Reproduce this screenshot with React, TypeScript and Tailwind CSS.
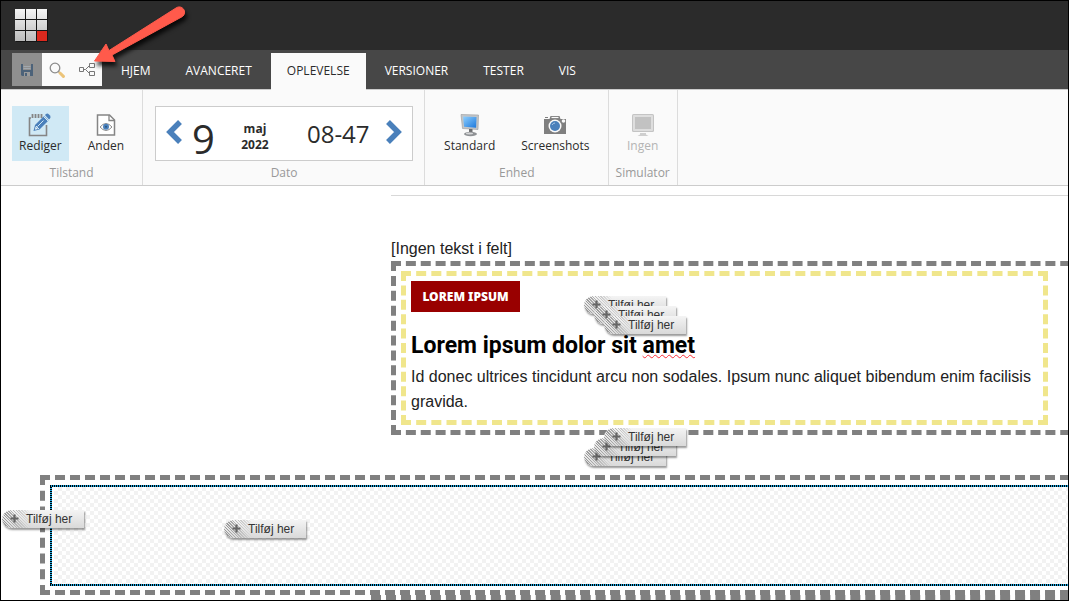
import { ReactNode } from "react";
import clsx from "clsx";

const tabs = ["HJEM", "AVANCERET", "OPLEVELSE", "VERSIONER", "TESTER", "VIS"];

function Logo() {
  const cells = [0, 1, 2];

  return (
    <svg width="34" height="34" viewBox="0 0 34 34" aria-label="Sitecore">
      <defs>
        <linearGradient id="logo" x1="0" y1="0" x2="0" y2="33" gradientUnits="userSpaceOnUse">
          <stop offset="0" stopColor="#f5f5f5" />
          <stop offset="1" stopColor="#b9b9b9" />
        </linearGradient>
      </defs>
      <rect x="1" y="1" width="32" height="32" fill="#151515" />
      {cells.map((row) =>
        cells.map((col) => (
          <rect
            key={`${row}-${col}`}
            x={col * 11}
            y={row * 11}
            width="10"
            height="10"
            fill={row === 2 && col === 2 ? "#dc291e" : "url(#logo)"}
          />
        ))
      )}
    </svg>
  );
}

function SaveIcon() {
  return (
    <svg width="14" height="14" viewBox="0 0 14 14">
      <path d="M1 1h12v12H2l-1-1z" fill="#4c6279" />
      <path d="M3 1h8v6H3z" fill="#8f8f8f" />
      <path d="M3.5 3.5h7M3.5 5.5h7" stroke="#a2a8ae" />
      <path d="M4 9h6v4H4z" fill="#9b9b9b" />
      <path d="M5 10h2v3H5z" fill="#4c6279" />
    </svg>
  );
}

function SearchIcon() {
  return (
    <svg width="16" height="16" viewBox="0 0 16 16" fill="none">
      <circle cx="6" cy="6" r="4.8" stroke="#8c8c8c" strokeWidth="1.3" />
      <path d="M9.5 9.5l1.5 1.5" stroke="#8c8c8c" strokeWidth="1.5" />
      <path d="M11 11l3.4 3.4" stroke="#ecc479" strokeWidth="3" strokeLinecap="round" />
    </svg>
  );
}

function TreeIcon() {
  return (
    <svg width="18" height="16" viewBox="0 0 18 16" fill="none" stroke="#777">
      <path d="M1.500 5.500h4v4h-4zM11.500 1.500h5v4h-5zM11.500 9.500h5v4h-5z" />
      <path d="M6 7.500h1.500l4-4M7.500 7.500l4 4" />
    </svg>
  );
}

function EditIcon() {
  return (
    <svg width="24" height="24" viewBox="0 0 24 24" fill="none">
      <path d="M3 5H1.500v17.500h17V12" stroke="#858585" strokeWidth="1.600" />
      <path d="M4.500 1v4M7.500 1v4M10.500 1v4M13.500 1v4" stroke="#858585" strokeWidth="1.800" />
      <path d="M5.500 18l1.500-6L16 3l4.500 4.500-9 9z" fill="#4a80bb" />
      <path d="M17 2l1-1q1.500-1 3 .5l1 1q1.200 1.500 0 3l-1 1z" fill="#4a80bb" />
      <path d="M15.500 3.500L20 8M8 13l3 3M9.500 13.500l6-6" stroke="#d0e8f5" strokeWidth="1" />
      <path d="M7.500 13.500l2.500 2.500-3 .8z" fill="#e4f1f8" />
    </svg>
  );
}

function PageIcon() {
  return (
    <svg width="24" height="24" viewBox="0 0 24 24" fill="none">
      <path d="M3.500 2h12l5 5v15h-17z" fill="#fff" stroke="#858585" strokeWidth="1.500" />
      <path d="M15 2v5.500h5.500" stroke="#858585" strokeWidth="1.300" />
      <path d="M6 14q6-7 12 0q-6 7-12 0z" stroke="#8c8c8c" />
      <circle cx="12" cy="13.800" r="3" fill="#4a80bb" />
      <circle cx="12" cy="13.800" r="1" fill="#2c567f" />
    </svg>
  );
}

function ScreenIcon() {
  return (
    <svg width="24" height="24" viewBox="0 0 24 24">
      <defs>
        <linearGradient id="screen" x1="0" y1="0" x2="1" y2="1">
          <stop offset="0" stopColor="#8fd0ff" />
          <stop offset="1" stopColor="#1c78dc" />
        </linearGradient>
      </defs>
      <path d="M3 1.500l17.500.5-.5 14.500-15.500-1z" fill="#c3c5c7" stroke="#96999c" strokeWidth=".6" />
      <path d="M5 3.500l13.500.4-.4 10.800-12-.9z" fill="url(#screen)" />
      <path d="M11 16h3.500v4H11z" fill="#6d6f71" />
      <ellipse cx="12.500" cy="21" rx="6.500" ry="2.200" fill="#8e9194" />
      <ellipse cx="11.500" cy="20.500" rx="3.500" ry=".9" fill="#d5d6d7" />
    </svg>
  );
}

function CameraIcon() {
  return (
    <svg width="24" height="24" viewBox="0 0 24 24">
      <path d="M1 6h5.500l1-3h9l1 3H23v15H1z" fill="#7f7f7f" />
      <path d="M8.500 4.500h7" stroke="#fafafa" strokeWidth="1.200" />
      <path d="M2 4.500h3" stroke="#7f7f7f" />
      <circle cx="12" cy="13" r="6.500" fill="#fafafa" />
      <circle cx="12" cy="13" r="5" fill="#4a80bb" />
      <path d="M9 12q1-2 3-2" stroke="#a9c6e2" fill="none" />
      <circle cx="20.500" cy="8" r="1.800" fill="#fafafa" />
    </svg>
  );
}

function MonitorIcon() {
  return (
    <svg width="24" height="24" viewBox="0 0 24 24">
      <rect x="1" y="1" width="22" height="18" rx="1.500" fill="#c4c4c4" />
      <rect x="2" y="2" width="20" height="16" rx="1" fill="#dedede" />
      <path d="M4 4h16v12H4z" fill="#c2c2c2" />
      <path d="M9 20h6v1.500l2.500 1.500h-11L9 21.500z" fill="#cfcfcf" />
    </svg>
  );
}

function Chevron({ d }: { d: string }) {
  return (
    <svg width="18" height="26" viewBox="0 0 18 26" fill="none">
      <path d={d} stroke="#4a80bb" strokeWidth="5.500" />
    </svg>
  );
}

function Pointer() {
  return (
    <svg
      className="pointer-events-none absolute left-[88px] top-0 drop-shadow-[2px_4px_2px_rgba(0,0,0,0.8)]"
      width="108"
      height="72"
      viewBox="0 0 108 72"
    >
      <path
        d="M5.500 60L17 43L20 49.500L87 7A5.200 5.200 0 0 1 93.500 15.500L23 54L26 60.500Z"
        fill="#ff5a4b"
        stroke="#ff5a4b"
        strokeLinejoin="round"
      />
    </svg>
  );
}

// black and blue selection edge of the empty placeholder
function Marquee() {
  return (
    <svg className="block h-0.5 w-full bg-[#1ba5e0]">
      <line x2="100%" y1="1" y2="1" stroke="#000" strokeWidth="2" strokeDasharray="1 1" shapeRendering="crispEdges" />
    </svg>
  );
}

interface ToolButtonProps {
  icon: ReactNode;
  label: string;
  active?: boolean;
  disabled?: boolean;
}

function ToolButton({ icon, label, active, disabled }: ToolButtonProps) {
  return (
    <button
      type="button"
      disabled={disabled}
      className={clsx(
        "flex h-[55px] flex-col items-center px-[7px] pt-[7px]",
        active && "bg-[#d0e9f5]",
        disabled ? "text-[#b4b4b4]" : "text-[#2b2b2b]"
      )}
    >
      {icon}
      <span className="mt-px leading-4">{label}</span>
    </button>
  );
}

interface ToolGroupProps {
  label: string;
  className: string;
  children: ReactNode;
}

function ToolGroup({ label, className, children }: ToolGroupProps) {
  return (
    <div className={clsx("flex flex-col items-center border-r border-[#dcdcdc] pt-4", className)}>
      <div className="flex gap-3">{children}</div>
      <span className="mt-1 leading-4 text-[#999]">{label}</span>
    </div>
  );
}

function AddHere({ className }: { className: string }) {
  return (
    <button
      type="button"
      className={clsx(
        "absolute flex h-[18px] w-[82px] items-center rounded-l-full bg-linear-to-b from-[#f4f4f4] to-[#d9d9d9] pl-6 text-xs text-[#333] shadow-[1px_2px_2px_rgba(0,0,0,0.4)]",
        className
      )}
    >
      <span className="absolute inset-y-0 left-0 w-8 rounded-l-full bg-[repeating-linear-gradient(45deg,#999_0_1px,transparent_1px_2px)] mask-r-from-10% mask-r-to-90%" />
      <svg className="absolute left-2 top-1" width="9" height="9" viewBox="0 0 9 9">
        <path d="M4.500 .5v8M.5 4.500h8" stroke="#666" strokeWidth="2.200" />
      </svg>
      Tilføj her
    </button>
  );
}

export default function App() {
  return (
    <div className="relative overflow-hidden border border-black bg-white font-['Open_Sans',sans-serif] text-xs">
      <header className="flex h-[49px] bg-[#2b2b2b] pl-[14px] pt-2">
        <Logo />
      </header>

      <nav className="flex h-10 border-b border-[#ccc] bg-[#474747] pl-[11px] pt-[3px]">
        <div className="flex h-[33px]">
          <button type="button" aria-label="Gem" className="flex w-[30px] items-center justify-center bg-[#8f8f8f]">
            <SaveIcon />
          </button>
          <button type="button" aria-label="Søg" className="flex w-[30px] items-center justify-center bg-[#fafafa]">
            <SearchIcon />
          </button>
          <button type="button" aria-label="Struktur" className="flex w-[30px] items-center justify-center bg-[#fafafa]">
            <TreeIcon />
          </button>
        </div>
        <div className="ml-[3px] flex gap-[3px]">
          {tabs.map((tab) => (
            <a
              key={tab}
              href="#"
              className={clsx(
                "h-[37px] px-4 pt-[10px] leading-4",
                tab === "OPLEVELSE" ? "bg-[#fafafa] text-[#2b2b2b]" : "text-white"
              )}
            >
              {tab}
            </a>
          ))}
        </div>
      </nav>

      <section className="flex h-24 border-b border-[#ccc] bg-[#fafafa]">
        <ToolGroup label="Tilstand" className="px-[11px]">
          <ToolButton icon={<EditIcon />} label="Rediger" active />
          <ToolButton icon={<PageIcon />} label="Anden" />
        </ToolGroup>

        <ToolGroup label="Dato" className="pl-3 pr-[11px]">
          <div className="flex h-[55px] w-[258px] items-center border border-[#ccc] bg-white px-[9px] text-[#2b2b2b]">
            <button type="button" aria-label="Forrige" className="pb-1">
              <Chevron d="M15 3L5 13l10 10" />
            </button>
            <span className="ml-[9px] pt-2.5 text-[40px] leading-10">9</span>
            <span className="ml-5 w-10 pt-1.5 text-center font-bold leading-4">
              maj
              <br />
              2022
            </span>
            <span className="ml-8 flex-1 text-2xl">08-47</span>
            <button type="button" aria-label="Næste" className="pb-1">
              <Chevron d="M3 3l10 10L3 23" />
            </button>
          </div>
        </ToolGroup>

        <ToolGroup label="Enhed" className="pl-3 pr-[11px]">
          <ToolButton icon={<ScreenIcon />} label="Standard" />
          <ToolButton icon={<CameraIcon />} label="Screenshots" />
        </ToolGroup>

        <ToolGroup label="Simulator" className="px-[7px]">
          <ToolButton icon={<MonitorIcon />} label="Ingen" disabled />
        </ToolGroup>
      </section>

      <main className="relative font-['Liberation_Sans',Arial,sans-serif] text-base leading-[25px] text-[#222]">
        <div className="pl-[390px] pt-[9px]">
          <hr className="mb-10 border-[#d8d8d8]" />
          <p>[Ingen tekst i felt]</p>
          <div className="-mr-8 border-[5px] border-r-0 border-dashed border-[gray] p-[5px] pr-[52px]">
            <div className="border-[5px] border-dashed border-[#f0e68c] p-[5px] pb-1.5">
              <span className="flex h-[31px] w-[109px] items-center justify-center bg-[#900] font-['Noto_Sans',sans-serif] text-xs font-black text-white">
                LOREM IPSUM
              </span>
              <h2 className="mt-[18px] h-[34px] font-['Roboto',sans-serif] text-[23px] font-bold leading-8 text-black">
                Lorem ipsum dolor sit{" "}
                <span className="underline decoration-red-500 decoration-wavy decoration-1">amet</span>
              </h2>
              <p>
                Id donec ultrices tincidunt arcu non sodales. Ipsum nunc aliquet bibendum enim facilisis gravida.
              </p>
            </div>
          </div>
        </div>

        <div className="-mr-8 ml-[39px] mt-10 border-[5px] border-r-0 border-dashed border-[gray] pb-1 pl-[5px] pt-[5px]">
          <Marquee />
          <div className="flex h-[97px]">
            <div className="w-0.5 bg-[linear-gradient(#000_50%,#1ba5e0_0)] bg-size-[2px_2px]" />
            <div className="ml-0.5 flex-1 bg-[conic-gradient(#f2f2f2_25%,#fff_0_50%,#f2f2f2_0_75%,#fff_0)] bg-size-[8px_8px]" />
          </div>
          <Marquee />
        </div>
        <div className="-mr-8 ml-[370px] border-t-[5px] border-dashed border-[gray]" />

        <AddHere className="left-[583px] top-[110px]" />
        <AddHere className="left-[593px] top-[120px]" />
        <AddHere className="left-[603px] top-[130px]" />
        <AddHere className="left-[583px] top-[262px]" />
        <AddHere className="left-[593px] top-[252px]" />
        <AddHere className="left-[603px] top-[242px]" />
        <AddHere className="left-px top-[324px]" />
        <AddHere className="left-[223px] top-[334px]" />
      </main>

      <Pointer />
    </div>
  );
}
